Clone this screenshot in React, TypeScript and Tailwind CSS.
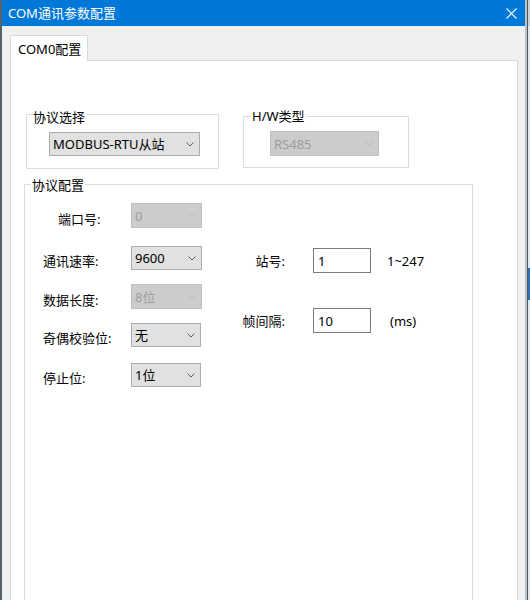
import React from 'react';
import clsx from 'clsx';

const Chevron = ({ disabled }: { disabled?: boolean }) => (
  <svg width="8" height="5" viewBox="0 0 8 5" className="shrink-0">
    <polyline
      points="0.5,0.5 4,4 7.5,0.5"
      fill="none"
      stroke={disabled ? '#b9b9b9' : '#606060'}
      strokeWidth="1"
    />
  </svg>
);

type ComboProps = { value: string; size: string; disabled?: boolean };

const Combo = ({ value, size, disabled }: ComboProps) => (
  <div
    className={clsx(
      'flex items-center justify-between border pl-[3px] pr-[5px] leading-[16px]',
      size,
      disabled
        ? 'border-[#bfbfbf] bg-[#cccccc] text-[#9d9d9d]'
        : 'border-[#adadad] bg-[#e1e1e1] text-black',
    )}
  >
    <span>{value}</span>
    <Chevron disabled={disabled} />
  </div>
);

type RowProps = {
  label: string;
  value: string;
  rowClass: string;
  labelClass: string;
  size: string;
  disabled?: boolean;
};

// one line of the left column: label + combo box
const LeftRow = ({ label, value, rowClass, labelClass, size, disabled }: RowProps) => (
  <div className={clsx('flex items-center', rowClass)}>
    <span className={clsx('mt-[6px] w-[106px] leading-[16px]', labelClass)}>{label}</span>
    <Combo value={value} size={size} disabled={disabled} />
  </div>
);

const RightRow = ({
  label,
  value,
  unit,
  rowClass,
  unitClass,
}: {
  label: string;
  value: string;
  unit: string;
  rowClass: string;
  unitClass: string;
}) => (
  <div className={clsx('flex items-center', rowClass)}>
    <span className="w-[55px] text-right leading-[16px]">{label}</span>
    <div className="ml-[28px] flex h-[25px] w-[58px] items-center border border-[#7a7a7a] bg-white pl-[4px] leading-[16px]">
      {value}
    </div>
    <span className={clsx('leading-[16px]', unitClass)}>{unit}</span>
  </div>
);

const App: React.FC = () => {
  return (
    <div className="flex h-[600px] w-[530px] overflow-hidden bg-[#dfe6ee] font-['Noto_Sans','Noto_Sans_CJK_SC',sans-serif] text-[13px] text-black">
      <div className="flex w-[527px] shrink-0 flex-col border-l-2 border-r-2 border-l-[#56636d] border-r-[#b9c3cc] bg-[#f0f0f0]">
        {/* Title bar */}
        <div className="flex h-[26px] shrink-0 items-center justify-between bg-[#0078d7] pl-[6px] pr-[8px] text-white">
          <span className="leading-[16px]">COM通讯参数配置</span>
          <svg width="11" height="11" viewBox="0 0 11 11">
            <path d="M0.5 0.5 L10.5 10.5 M10.5 0.5 L0.5 10.5" stroke="#ffffff" strokeWidth="1.1" />
          </svg>
        </div>

        <div className="flex flex-1 flex-col pl-[8px] pr-[7px] pt-[9px]">
          {/* Tab header */}
          <div className="flex">
            <div className="relative z-10 -mb-[1px] flex h-[26px] w-[78px] items-center border border-b-0 border-[#d9d9d9] bg-white pl-[7px] leading-[16px]">
              COM0配置
            </div>
          </div>

          {/* Tab page */}
          <div className="flex-1 border border-[#d9d9d9] bg-white">
            <div className="mt-[53px] flex items-start">
              <div className="relative ml-[15px] h-[55px] w-[193px] border border-[#dcdcdc] pl-[22px] pt-[17px]">
                <span className="absolute -top-[6px] left-[5px] bg-white px-[1px] leading-[16px]">
                  协议选择
                </span>
                <Combo value="MODBUS-RTU从站" size="h-[24px] w-[151px]" />
              </div>
              <div className="relative ml-[24px] mt-[2px] h-[52px] w-[166px] border border-[#dcdcdc] pl-[26px] pt-[14px]">
                <span className="absolute -top-[9px] left-[7px] bg-white px-[1px] leading-[16px]">
                  H/W类型
                </span>
                <Combo value="RS485" size="h-[25px] w-[109px]" disabled />
              </div>
            </div>

            <div className="relative ml-[13px] mt-[15px] flex h-[460px] w-[449px] border border-[#dcdcdc]">
              <span className="absolute -top-[8px] left-[6px] bg-white px-[1px] leading-[16px]">
                协议配置
              </span>

              <div className="flex w-[205px] flex-col">
                <LeftRow
                  label="端口号:"
                  value="0"
                  rowClass="mt-[18px]"
                  labelClass="pl-[33px]"
                  size="h-[25px] w-[71px]"
                  disabled
                />
                <LeftRow
                  label="通讯速率:"
                  value="9600"
                  rowClass="mt-[18px]"
                  labelClass="pl-[18px]"
                  size="h-[24px] w-[71px]"
                />
                <LeftRow
                  label="数据长度:"
                  value="8位"
                  rowClass="mt-[14px]"
                  labelClass="pl-[18px]"
                  size="h-[25px] w-[71px]"
                  disabled
                />
                <LeftRow
                  label="奇偶校验位:"
                  value="无"
                  rowClass="mt-[14px]"
                  labelClass="pl-[18px]"
                  size="h-[24px] w-[70px]"
                />
                <LeftRow
                  label="停止位:"
                  value="1位"
                  rowClass="mt-[16px]"
                  labelClass="pl-[18px]"
                  size="h-[24px] w-[70px]"
                />
              </div>

              <div className="flex flex-col">
                <RightRow label="站号:" value="1" unit="1~247" rowClass="mt-[63px]" unitClass="ml-[16px]" />
                <RightRow label="帧间隔:" value="10" unit="(ms)" rowClass="mt-[35px]" unitClass="ml-[19px]" />
              </div>
            </div>
          </div>
        </div>
      </div>

      {/* edge of the window behind */}
      <div className="flex flex-1 flex-col border-l border-[#4d5861]">
        <div className="h-[26px] bg-[#c8d0d8]" />
        <div className="mt-[242px] h-[32px] bg-[#2f6fb5]" />
      </div>
    </div>
  );
};

export default App;
